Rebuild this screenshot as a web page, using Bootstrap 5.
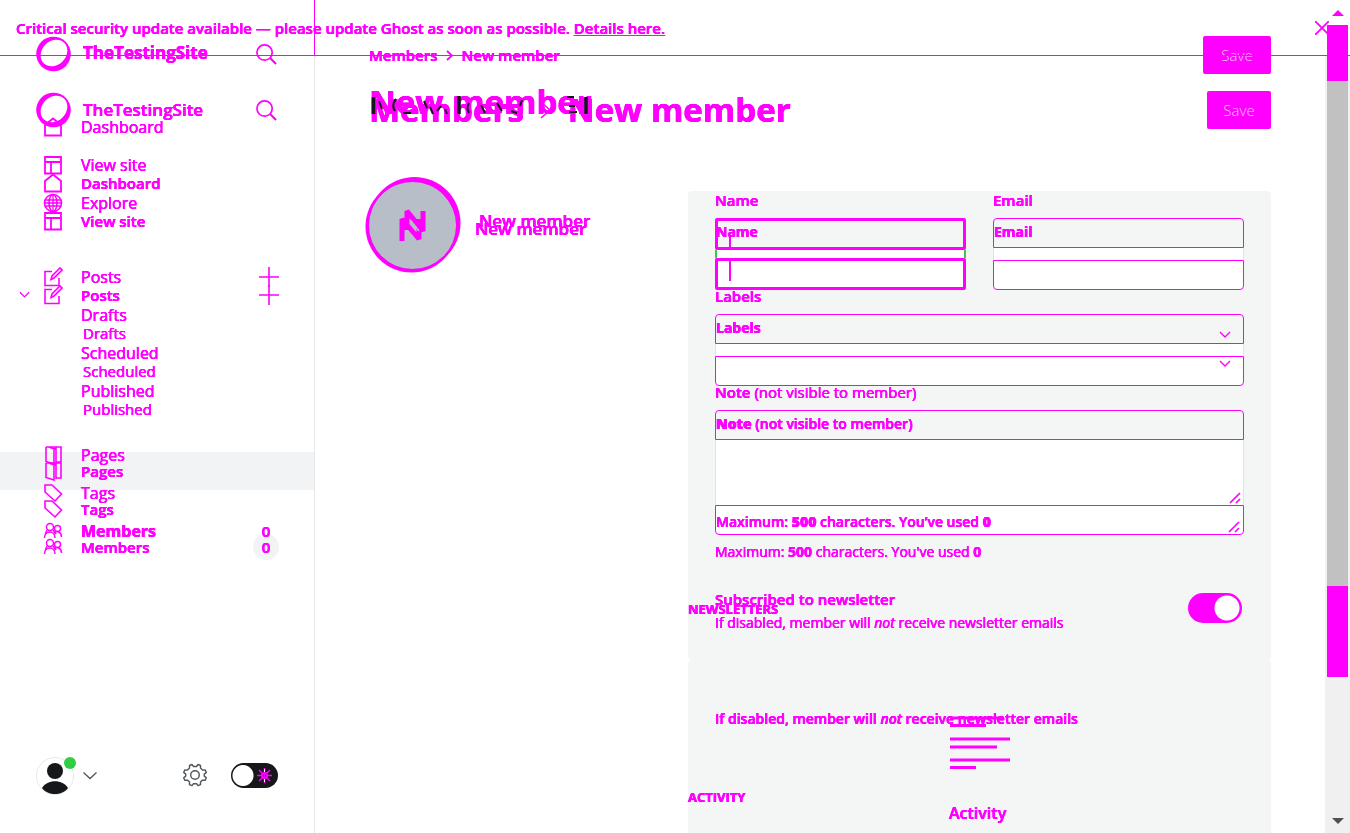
<!DOCTYPE html>
<html lang="en">
<head>
<meta charset="utf-8">
<meta name="viewport" content="width=device-width, initial-scale=1">
<title>New member</title>
<link href="https://cdn.jsdelivr.net/npm/bootstrap@5.3.0/dist/css/bootstrap.min.css" rel="stylesheet">
<style>
:root{--hot:#f0f;--ink:#15171a;--pane:#f4f6f6;--line:#dfe3e3}
body{font-family:"Open Sans","Noto Sans",sans-serif;font-size:16px;line-height:20px;color:var(--hot);background:#fff;overflow:hidden;text-shadow:0 0 0 var(--hot),0 0 0 var(--hot),0 0 0 var(--hot)}
a{color:inherit;text-decoration:none}
a:hover{color:inherit}
svg{display:block;flex:none;fill:none;stroke:var(--hot)}
.stack{display:grid}
.stack>*{grid-area:1/1}
.t17{font-size:17px}
.t15{font-size:15px}
.t14{font-size:14px}
.semi{font-weight:600}
/* notice */
.notice{height:56px;border-bottom:1px solid var(--hot);padding:0 21px 0 16px;z-index:3;pointer-events:none}
.notice a{text-decoration:underline}
.notice button{pointer-events:auto}
.plainbtn{background:none;border:0;padding:0;color:inherit}
/* sidebar */
.side{width:315px;border-right:1px solid #e6e7e8}
.side-cap{left:314px;width:1px;height:56px;background:var(--hot)}
.set-b{padding-top:36px}
.set-a{padding-top:92px}
.brand{height:36px;padding:0 37px 0 36px;margin-bottom:36px}
.set-b .brand span{padding-bottom:2px}
.brand span{margin-left:11px}
.item{height:38px;padding:0 35px 0 43px}
.item span:first-of-type{margin-left:18px}
.item.sub{padding-left:81px}
.item.sub span:first-of-type{margin-left:0}
.set-a .sub{padding-left:83px}
.gap-l{margin-top:36px}
.set-b .gap-m{margin-top:26px}
.set-a .gap-m{margin-top:24px}
.band{background:#f1f3f4}
.count{width:26px;height:26px;border-radius:50%;text-align:center;line-height:26px}
.set-a .count{background:#f1f3f4}
.chev{left:19px}
.foot{padding:0 36px 38px 36px}
.night{appearance:none;width:47px;height:25px;border-radius:13px;margin:0;background:radial-gradient(circle at 12px 50%,#fff 10px,transparent 11px) var(--ink)}
.sun{right:6px;top:5px;pointer-events:none}
.gear{stroke:#50565b}
/* main */
.content{padding:36px 54px 0 54px}
.save{background:var(--hot);border:0;border-radius:2px;height:38px;color:#ffc4ff;font-weight:300;font-size:15px;text-shadow:none}
.wide{width:68px}
.slim{width:64px}
.big{font-size:33px;line-height:38px;font-weight:700;margin:0;white-space:nowrap}
.big-b{line-height:22px;align-self:start}
.row-two{margin-top:17px}
.split{display:grid;grid-template-columns:319fr 583fr;margin-top:48px}
.who{height:96px;margin-left:-4px;gap:14px}
.who-a{padding-top:8px}
.who-b{padding:0 0 4px 4px}
.panes{margin-top:14px}
.pane{background:var(--pane);border-radius:4px;padding:3px 27px 0 27px}
.pane-1{height:469px}
.pane-2{height:240px}
.cap-b{display:block;height:14px;line-height:12px;margin-bottom:10px}
.duo{display:grid;grid-template-columns:1fr 1fr;column-gap:27px}
.bx{height:30px;border:1px solid var(--hot);border-radius:4px 4px 0 0;line-height:25px;display:block}
.strip{height:12px;background:#fff;border:solid var(--line);border-width:0 1px}
.ctl{width:100%;height:30px;border:1px solid var(--hot);border-radius:0 0 4px 4px;background:#fff;display:block;padding:0 14px;color:var(--hot);outline:0;appearance:none}
.on .bx,.on .ctl{height:32px;border-width:3px;border-radius:2px}
.on .bx{line-height:21px}
.on .bx span{margin-left:-2px}
.on .strip{height:8px;border-color:#30cf43;border-width:0 2px}
.bar{width:2px;background:var(--hot);left:14px}
.bar-1{top:17px;height:15px}
.bar-2{top:43px;height:20px}
.note{display:block;width:100%;height:65px;resize:none;border:solid var(--line);border-width:0 1px;background:#fff;outline:0}
.grip{right:3px;bottom:1px}
.last{height:30px;border:1px solid var(--hot);border-radius:0 0 4px 4px;background:#fff;line-height:32px}
.arrow-1{right:13px;top:17px}
.arrow-2{right:13px;top:46px}
.tag{left:0;font-size:13px;line-height:16px;font-weight:700}
.tag-1{top:410px}
.tag-2{top:598px}
.after{line-height:16px;margin-top:9px;font-size:14px}
.swrow{margin-top:29px}
.sw{appearance:none;width:54px;height:30px;border-radius:15px;margin:4px 2px 0 0;background:radial-gradient(circle at 39px 50%,#fff 12px,transparent 13px) var(--hot)}
.l2{padding-top:46px}
.act{left:261px;top:525px;gap:31px}
/* scroll rail */
.rail{width:25px;padding:0 2px;background:linear-gradient(#fff 56px,#f0f0f0 56px)}
.h-a{flex:56}.h-b{flex:505}.h-c{flex:91}.h-d{flex:156}
.hotbg{background:var(--hot)}
.greybg{background:#c1c1c1}
</style>
</head>
<body>
<svg width="0" height="0" class="position-absolute" aria-hidden="true">
<defs>
<symbol id="ring" viewBox="0 0 36 36"><circle cx="17.500" cy="18" r="17.300" fill="#f0f" stroke="none"/><ellipse cx="18" cy="17" rx="14.500" ry="12" transform="rotate(-45 18 17)" fill="#fff" stroke="none"/></symbol>
<symbol id="lens" viewBox="0 0 22 22"><circle cx="9" cy="9" r="8" stroke-width="1.800"/><path d="M15 15l6 6" stroke-width="2.200"/></symbol>
<symbol id="home" viewBox="0 0 20 20"><path d="M2 18.500V8l8-6.500 8 6.500v10.500z" stroke-width="1.800"/></symbol>
<symbol id="lay" viewBox="0 0 20 20"><path d="M2 2h16v16.500H2zM2 7h16M8 7v11" stroke-width="1.800"/></symbol>
<symbol id="globe" viewBox="0 0 20 20"><circle cx="10" cy="10" r="8.500" stroke-width="1.600"/><ellipse cx="10" cy="10" rx="4" ry="8.500" stroke-width="1.600"/><path d="M2 7h16M2 13h16M1.500 10h17M10 1v18" stroke-width="1.300"/></symbol>
<symbol id="edit" viewBox="0 0 20 20"><path d="M9 4.500H2V18.500h14V11M8 12.500l1-3.500 8-8 2 2-8 8z" stroke-width="1.600"/></symbol>
<symbol id="page" viewBox="0 0 20 20"><path d="M3 2h15v15h-5M3 2v14.500l8 2.500V4L6 2M11 4l2-1v15" stroke-width="1.600"/></symbol>
<symbol id="label" viewBox="0 0 20 20"><path d="M2 2h7l9.500 9-6.500 7L2 9z" stroke-width="1.600"/></symbol>
<symbol id="folk" viewBox="0 0 20 20"><circle cx="7" cy="6" r="3.500" stroke-width="1.500"/><circle cx="14.500" cy="7.500" r="3" stroke-width="1.500"/><path d="M1.500 17c0-8 10.500-8 10.500 0M11 12c3-3 7.500-1 7.500 4M4 9l-2 5M10 9l3 4" stroke-width="1.500"/></symbol>
<symbol id="plus" viewBox="0 0 20 20"><path d="M10 0v20M0 10h20" stroke-width="1.600"/></symbol>
<symbol id="down" viewBox="0 0 12 8"><path d="M1 1l5 5 5-5" stroke-width="1.400"/></symbol>
<symbol id="grip" viewBox="0 0 12 12"><path d="M1 11L11 1M7 11l4-4" stroke-width="1.700"/></symbol>
</defs>
</svg>

<div class="notice position-absolute top-0 start-0 end-0 d-flex align-items-center justify-content-between">
  <span class="semi t15">Critical security update available — please update Ghost as soon as possible. <a href="#">Details here.</a></span>
  <button class="plainbtn" aria-label="Close"><svg width="14" height="14" viewBox="0 0 14 14"><path d="M0 0l14 14M14 0L0 14" stroke-width="1.800"/></svg></button>
</div>
<div class="side-cap position-absolute top-0"></div>

<div class="d-flex vh-100">
  <aside class="side d-flex flex-column flex-shrink-0">
    <div class="stack">
      <nav class="set-a">
        <div class="brand d-flex align-items-center semi t17"><svg width="36" height="36"><use href="#ring"/></svg><span class="me-auto">TheTestingSite</span><svg width="21" height="21"><use href="#lens"/></svg></div>
        <a href="#" class="item d-flex align-items-center t15 semi"><svg width="20" height="20"><use href="#home"/></svg><span>Dashboard</span></a>
        <a href="#" class="item d-flex align-items-center t15 semi"><svg width="20" height="20"><use href="#lay"/></svg><span>View site</span></a>
        <a href="#" class="item gap-l d-flex align-items-center t15 semi position-relative"><svg class="chev position-absolute" width="11" height="8"><use href="#down"/></svg><svg width="20" height="20"><use href="#edit"/></svg><span class="me-auto">Posts</span><svg width="20" height="20"><use href="#plus"/></svg></a>
        <a href="#" class="item sub d-flex align-items-center t15"><span>Drafts</span></a>
        <a href="#" class="item sub d-flex align-items-center t15"><span>Scheduled</span></a>
        <a href="#" class="item sub d-flex align-items-center t15"><span>Published</span></a>
        <a href="#" class="item band gap-m d-flex align-items-center t15 semi"><svg width="20" height="20"><use href="#page"/></svg><span>Pages</span></a>
        <a href="#" class="item d-flex align-items-center t15 semi"><svg width="20" height="20"><use href="#label"/></svg><span>Tags</span></a>
        <a href="#" class="item d-flex align-items-center t15 semi"><svg width="20" height="20"><use href="#folk"/></svg><span class="me-auto">Members</span><b class="count semi">0</b></a>
      </nav>
      <nav class="set-b">
        <div class="brand d-flex align-items-center fw-bold t17"><svg width="36" height="36"><use href="#ring"/></svg><span class="me-auto">TheTestingSite</span><svg width="21" height="21"><use href="#lens"/></svg></div>
        <a href="#" class="item d-flex align-items-center"><svg width="20" height="20"><use href="#home"/></svg><span>Dashboard</span></a>
        <a href="#" class="item d-flex align-items-center"><svg width="20" height="20"><use href="#lay"/></svg><span>View site</span></a>
        <a href="#" class="item d-flex align-items-center"><svg width="20" height="20"><use href="#globe"/></svg><span>Explore</span></a>
        <a href="#" class="item gap-l d-flex align-items-center"><svg width="20" height="20"><use href="#edit"/></svg><span class="me-auto">Posts</span><svg width="20" height="20"><use href="#plus"/></svg></a>
        <a href="#" class="item sub d-flex align-items-center"><span>Drafts</span></a>
        <a href="#" class="item sub d-flex align-items-center"><span>Scheduled</span></a>
        <a href="#" class="item sub d-flex align-items-center"><span>Published</span></a>
        <a href="#" class="item gap-m d-flex align-items-center"><svg width="20" height="20"><use href="#page"/></svg><span>Pages</span></a>
        <a href="#" class="item d-flex align-items-center"><svg width="20" height="20"><use href="#label"/></svg><span>Tags</span></a>
        <a href="#" class="item d-flex align-items-center fw-bold"><svg width="20" height="20"><use href="#folk"/></svg><span class="me-auto">Members</span><b class="count t15 semi">0</b></a>
      </nav>
    </div>
    <div class="foot mt-auto d-flex align-items-center">
      <button class="plainbtn d-flex align-items-center" aria-label="Account">
        <svg width="42" height="40" viewBox="0 0 42 40"><circle cx="19" cy="21" r="18.500" fill="#fff" stroke="#e6e9eb"/><circle cx="19" cy="16" r="8" fill="#15171a" stroke="none"/><path d="M6 33c5-9 21-9 26 0-6 8-20 8-26 0z" fill="#15171a" stroke="none"/><circle cx="34" cy="8" r="6" fill="#30cf43" stroke="none"/></svg>
        <svg class="ms-1" width="16" height="9" viewBox="0 0 16 9"><path d="M1.500 1.500l6.500 6 6.500-6" stroke="#50565b" stroke-width="1.300"/></svg>
      </button>
      <button class="plainbtn ms-auto me-4" aria-label="Settings"><svg class="gear" width="24" height="24" viewBox="0 0 24 24"><path d="M9 1.500l1.500 2h3l1.500-2 2.500 1v2.600l2 2 2.800-.1 1 2.400-2 1.700v2l2 1.700-1 2.400-2.800-.1-2 2v2.600l-2.500 1-1.500-2h-3l-1.500 2-2.500-1v-2.600l-2-2-2.800.1-1-2.400 2-1.700v-2l-2-1.700 1-2.400 2.800.1 2-2V2.500z" stroke-width="1.400" stroke-linejoin="round"/><circle cx="12" cy="12" r="4.300" stroke-width="1.400"/></svg></button>
      <label class="position-relative d-block"><input type="checkbox" class="night d-block" aria-label="Night shift"><svg class="sun position-absolute" width="15" height="15" viewBox="0 0 15 15"><circle cx="7.500" cy="7.500" r="2.500" stroke-width="2"/><path d="M7.500 0v15M0 7.500h5M10 7.500h5M2 2l4 4M13 2L9 6M2 13l4-4M13 13L9 9" stroke-width="1.500"/><path d="M7.500 1v3M7.500 11v3" stroke="#fff" stroke-width="1"/></svg></label>
    </div>
  </aside>

  <main class="content flex-grow-1 overflow-hidden">
    <div class="d-flex align-items-center justify-content-between">
      <nav class="d-flex align-items-center t15 semi" aria-label="Breadcrumb"><a href="#">Members</a><svg class="mx-2" width="8" height="11" viewBox="0 0 8 11"><path d="M1 1l5 4.500L1 10" stroke-width="1.800"/></svg><span>New member</span></nav>
      <button class="save wide">Save</button>
    </div>
    <div class="row-two d-flex justify-content-between">
      <div class="stack align-items-center">
        <h1 class="big d-flex align-items-center">Members<svg class="mx-3" width="12" height="20" viewBox="0 0 12 20"><path d="M1 2l9 8-9 8" stroke-width="1.500"/></svg>New member</h1>
        <h2 class="big big-b">New member</h2>
        <svg width="220" height="38" viewBox="0 0 220 38" aria-hidden="true"><g stroke="#15171a"><path d="M4.500 6v17M90 5v18M217 6v17" stroke-width="3.500"/><path d="M10 10l3 8M27 8q-5 6-1 12M34 22h8M55 10l3 7M61 16l3 7M68 20l4-5M76 18l2 5M100 12q-3 5 0 10M112 14l4 8M128 12l5 8M142 20l6 2M151 15l2-6M198 6h7M200 15h6M200 21h8" stroke-width="2"/></g></svg>
      </div>
      <button class="save slim">Save</button>
    </div>

    <div class="split">
      <div class="who d-flex align-items-center">
        <svg width="96" height="96" viewBox="0 0 96 96"><g stroke="none"><circle cx="46.500" cy="49.500" r="46" fill="#f0f"/><circle cx="49.500" cy="46" r="46" fill="#f0f"/><circle cx="47.500" cy="48.500" r="43.500" fill="#b7bec8"/></g><path d="M37 64V42l17 20V42M42 53V34l16 20V34" stroke-width="5" stroke-linejoin="bevel"/><path d="M46 44l8 10" stroke="#b7bec8" stroke-width="1.500"/></svg>
        <div class="stack t17 semi"><span class="who-a">New member</span><span class="who-b">New member</span></div>
      </div>
      <form class="panes position-relative">
        <div class="pane pane-1">
          <div class="duo">
            <div class="on">
              <label class="cap-b semi t15" for="name">Name</label>
              <div class="position-relative">
                <div class="bx fw-bold t14"><span>Name</span></div><div class="strip"></div>
                <input class="ctl" id="name" type="text">
                <i class="bar bar-1 position-absolute"></i><i class="bar bar-2 position-absolute"></i>
              </div>
            </div>
            <div>
              <label class="cap-b semi t15" for="email">Email</label>
              <div class="bx fw-bold t14">Email</div><div class="strip"></div>
              <input class="ctl" id="email" type="email">
            </div>
          </div>
          <label class="cap-b semi t15" for="labels">Labels</label>
          <div class="position-relative">
            <div class="bx fw-bold t14">Labels</div><div class="strip"></div>
            <select class="ctl" id="labels"><option></option></select>
            <svg class="arrow-1 position-absolute" width="12" height="8"><use href="#down"/></svg>
            <svg class="arrow-2 position-absolute" width="12" height="8"><use href="#down"/></svg>
          </div>
          <label class="cap-b t15" for="note"><span class="semi">Note</span> (not visible to member)</label>
          <div class="bx semi t14"><b>Note</b> (not visible to member)</div>
          <div class="position-relative"><textarea class="note" id="note"></textarea><svg class="grip position-absolute" width="12" height="12"><use href="#grip"/></svg></div>
          <div class="last position-relative semi t14">Maximum: <b>500</b> characters. You’ve used <b>0</b><svg class="grip position-absolute" width="12" height="12"><use href="#grip"/></svg></div>
          <div class="after">Maximum: <b>500</b> characters. You've used <b>0</b></div>
          <div class="swrow d-flex justify-content-between">
            <label for="sub"><span class="semi d-block t15 mb-1">Subscribed to newsletter</span><span class="d-block t14">If disabled, member will <em>not</em> receive newsletter emails</span></label>
            <input class="sw" id="sub" type="checkbox" role="switch" checked>
          </div>
        </div>
        <div class="pane pane-2"><div class="l2 semi t14">If disabled, member will <em>not</em> receive newsletter emails</div></div>
        <div class="tag tag-1 position-absolute">NEWSLETTERS</div>
        <div class="tag tag-2 position-absolute">ACTIVITY</div>
        <div class="act position-absolute d-flex flex-column">
          <svg width="62" height="56" viewBox="0 0 62 56"><path d="M1 2h54M1 9.500h36M1 23h60M1 31h47M1 44h60M1 51.500h26" stroke-width="3"/></svg>
          <span class="semi">Activity</span>
        </div>
      </form>
    </div>
  </main>

  <div class="rail d-flex flex-column flex-shrink-0">
    <svg class="mx-auto" width="12" height="25" viewBox="0 0 12 25"><path d="M0 16l6-6 6 6z" fill="#f0f" stroke="none"/></svg>
    <div class="h-a hotbg"></div><div class="h-b greybg"></div><div class="h-c hotbg"></div>
    <div class="h-d d-flex align-items-end justify-content-center"><svg width="12" height="16" viewBox="0 0 12 16"><path d="M0 1h12L6 7z" fill="#505050" stroke="none"/></svg></div>
  </div>
</div>
<script src="https://cdn.jsdelivr.net/npm/bootstrap@5.3.0/dist/js/bootstrap.bundle.min.js"></script>
</body>
</html>
